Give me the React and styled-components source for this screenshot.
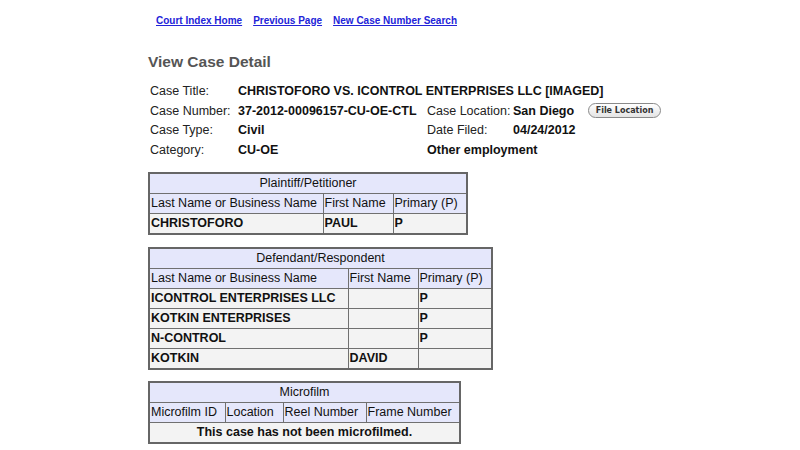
import React from "react";
import styled, { createGlobalStyle } from "styled-components";

const GlobalStyle = createGlobalStyle`
  html, body {
    margin: 0;
    padding: 0;
    background: #ffffff;
  }
  body {
    font-family: "Liberation Sans", Arial, sans-serif;
    color: #111;
  }
`;

const Page = styled.div`
  width: 800px;
  height: 450px;
  overflow: hidden;
  padding: 13px 0 0 148px;
  box-sizing: border-box;
`;

const Nav = styled.nav`
  display: flex;
  gap: 11px;
  padding-left: 8px;
  height: 14px;
  align-items: center;
`;

const NavLink = styled.a`
  font-size: 10px;
  font-weight: bold;
  color: #2323d8;
  text-decoration: underline;
`;

const Heading = styled.h2`
  margin: 26px 0 0;
  font-size: 15.5px;
  line-height: 18px;
  font-weight: bold;
  color: #555;
`;

const InfoGrid = styled.div`
  display: grid;
  grid-template-columns: 88px 189px 86px 72px auto;
  grid-auto-rows: 19.7px;
  align-items: center;
  margin: 10px 0 0 2px;
  font-size: 12.5px;
  white-space: nowrap;
`;

const Label = styled.span`
  color: #222;
`;

const Value = styled.span`
  font-weight: bold;
  grid-column: ${(p) => p.$span || "auto"};
`;

const PillButton = styled.button`
  justify-self: start;
  margin-left: 3px;
  width: 73px;
  height: 15px;
  padding: 0;
  border: 1px solid #8a8a8a;
  border-radius: 8px;
  background: linear-gradient(#ffffff, #e4e4e4);
  font-family: "DejaVu Sans", sans-serif;
  font-size: 8px;
  font-weight: bold;
  color: #333;
`;

const Table = styled.table`
  border-collapse: collapse;
  table-layout: fixed;
  border: 2px solid #666;
  font-size: 12.5px;
  margin-top: ${(p) => p.$top}px;
`;

const HeadCell = styled.td`
  background: #e5e7fb;
  border: 1px solid #707070;
  height: 19px;
  padding: 0 1px;
  white-space: nowrap;
  overflow: hidden;
  text-align: ${(p) => (p.$center ? "center" : "left")};
`;

const DataCell = styled.td`
  background: #f3f3f3;
  border: 1px solid #707070;
  height: 19px;
  padding: 0 1px;
  font-weight: bold;
  white-space: nowrap;
  overflow: hidden;
  text-align: ${(p) => (p.$center ? "center" : "left")};
`;

const PartyTable = ({ title, widths, headers, rows, top }) => (
  <Table $top={top} style={{ width: widths.reduce((a, b) => a + b, 0) }}>
    <colgroup>
      {widths.map((w, i) => (
        <col key={i} style={{ width: w }} />
      ))}
    </colgroup>
    <tbody>
      <tr>
        <HeadCell $center colSpan={widths.length}>
          {title}
        </HeadCell>
      </tr>
      <tr>
        {headers.map((h) => (
          <HeadCell key={h}>{h}</HeadCell>
        ))}
      </tr>
      {rows.map((r, i) =>
        typeof r === "string" ? (
          <tr key={i}>
            <DataCell $center colSpan={widths.length}>
              {r}
            </DataCell>
          </tr>
        ) : (
          <tr key={i}>
            {r.map((c, j) => (
              <DataCell key={j}>{c}</DataCell>
            ))}
          </tr>
        )
      )}
    </tbody>
  </Table>
);

const nameHeaders = ["Last Name or Business Name", "First Name", "Primary (P)"];

export default function App() {
  return (
    <Page>
      <GlobalStyle />
      <Nav>
        <NavLink href="#">Court Index Home</NavLink>
        <NavLink href="#">Previous Page</NavLink>
        <NavLink href="#">New Case Number Search</NavLink>
      </Nav>
      <Heading>View Case Detail</Heading>
      <InfoGrid>
        <Label>Case Title:</Label>
        <Value $span="2 / 6">CHRISTOFORO VS. ICONTROL ENTERPRISES LLC [IMAGED]</Value>
        <Label>Case Number:</Label>
        <Value>37-2012-00096157-CU-OE-CTL</Value>
        <Label>Case Location:</Label>
        <Value>San Diego</Value>
        <PillButton>File Location</PillButton>
        <Label>Case Type:</Label>
        <Value>Civil</Value>
        <Label>Date Filed:</Label>
        <Value $span="4 / 6">04/24/2012</Value>
        <Label>Category:</Label>
        <Value>CU-OE</Value>
        <Value $span="3 / 6">Other employment</Value>
      </InfoGrid>
      <PartyTable
        top={12}
        title="Plaintiff/Petitioner"
        widths={[174, 70, 74]}
        headers={nameHeaders}
        rows={[["CHRISTOFORO", "PAUL", "P"]]}
      />
      <PartyTable
        top={12}
        title="Defendant/Respondent"
        widths={[199, 70, 74]}
        headers={nameHeaders}
        rows={[
          ["ICONTROL ENTERPRISES LLC", "", "P"],
          ["KOTKIN ENTERPRISES", "", "P"],
          ["N-CONTROL", "", "P"],
          ["KOTKIN", "DAVID", ""],
        ]}
      />
      <PartyTable
        top={11}
        title="Microfilm"
        widths={[76, 58, 83, 94]}
        headers={["Microfilm ID", "Location", "Reel Number", "Frame Number"]}
        rows={["This case has not been microfilmed."]}
      />
    </Page>
  );
}
